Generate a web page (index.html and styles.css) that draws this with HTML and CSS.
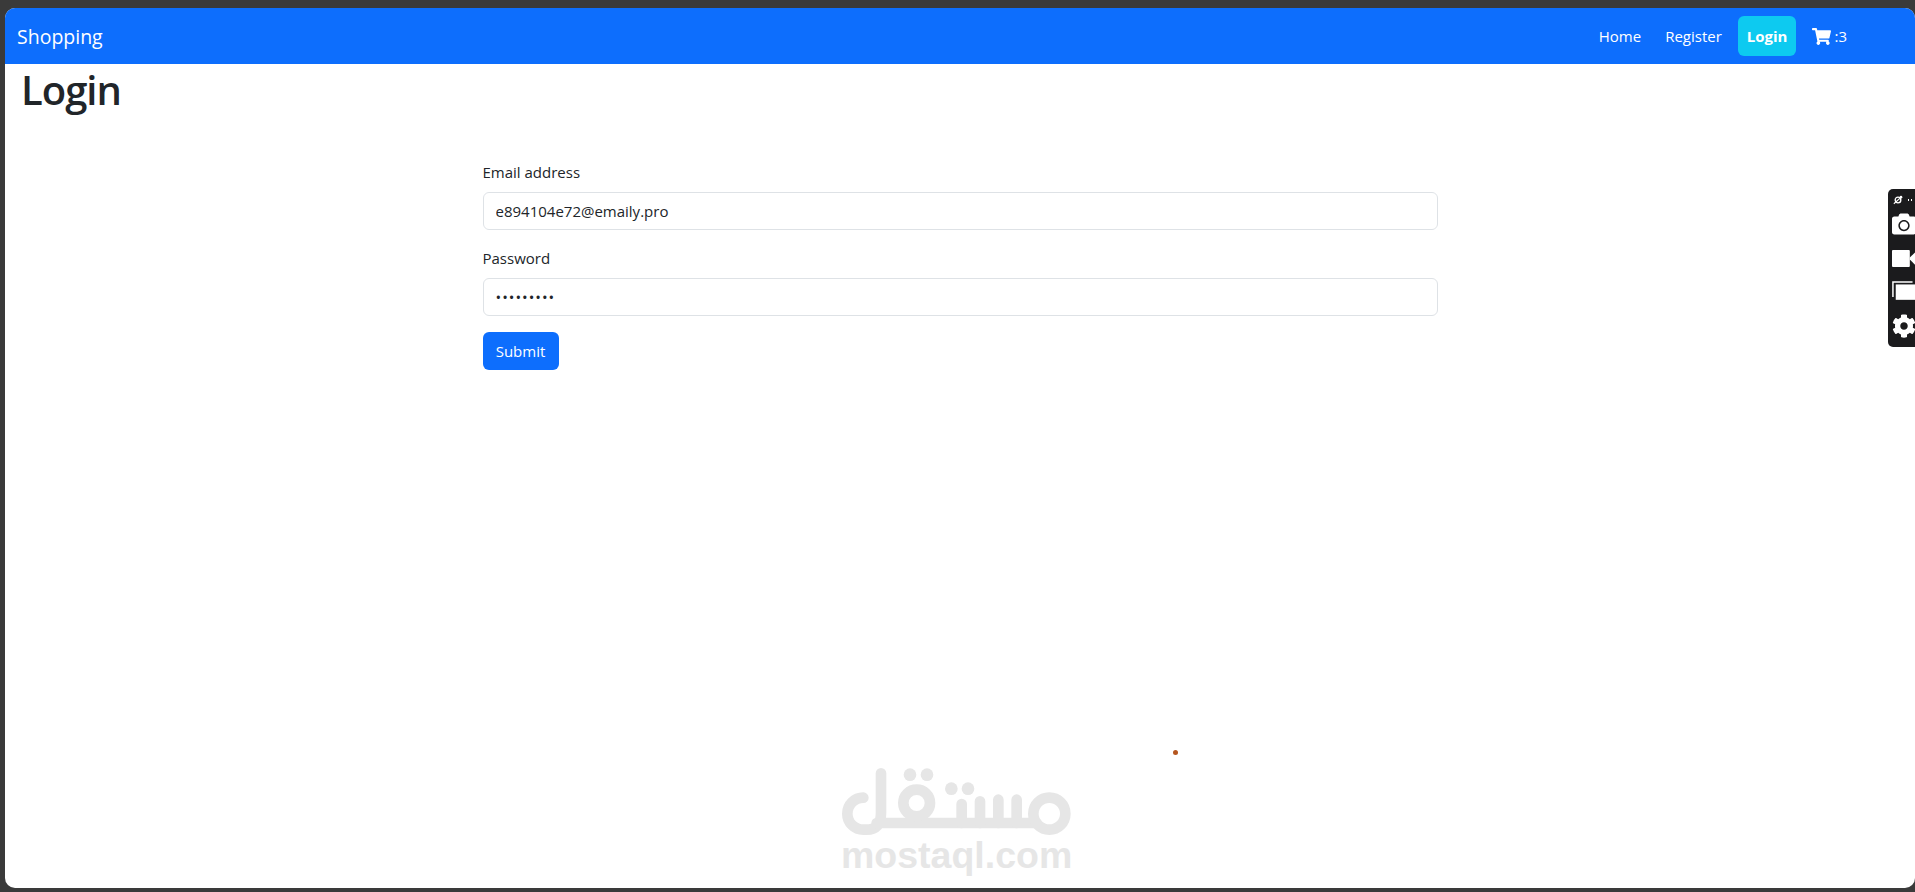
FILE: index.html
```html
<!DOCTYPE html>
<html lang="en">
<head>
    <meta charset="UTF-8">
    <meta name="viewport" content="width=device-width, initial-scale=1.0">
    <title>Login</title>
    <link rel="stylesheet" href="styles.css">
</head>
<body>
    <div class="window">
        <nav class="navbar">
            <a class="brand" href="#">Shopping</a>
            <div class="nav-links">
                <a class="nav-link" href="#">Home</a>
                <a class="nav-link" href="#">Register</a>
                <a class="nav-login" href="#">Login</a>
                <a class="nav-cart" href="#">
                    <svg class="cart-icon" viewBox="0 0 576 512"><path fill="currentColor" d="M528.12 301.319l47.273-208C578.806 78.301 567.391 64 551.99 64H159.208l-9.166-44.81C147.758 8.021 137.93 0 126.529 0H24C10.745 0 0 10.745 0 24v16c0 13.255 10.745 24 24 24h69.883l70.248 343.435C147.325 417.1 136 435.222 136 456c0 30.928 25.072 56 56 56s56-25.072 56-56c0-15.674-6.447-29.835-16.824-40h209.647C430.447 426.165 424 440.326 424 456c0 30.928 25.072 56 56 56s56-25.072 56-56c0-22.172-12.888-41.332-31.579-50.405l5.517-24.276c3.413-15.018-8.002-29.319-23.403-29.319H218.117l-6.545-32h293.145c11.206 0 20.92-7.754 23.403-18.681z"/></svg>
                    <span>:3</span>
                </a>
            </div>
        </nav>

        <h1 class="page-title">Login</h1>

        <form class="login-form">
            <div class="form-group">
                <label for="email">Email address</label>
                <input type="email" id="email" value="e894104e72@emaily.pro">
            </div>
            <div class="form-group">
                <label for="password">Password</label>
                <input class="password-input" type="password" id="password" value="123456789">
            </div>
            <button type="submit">Submit</button>
        </form>
    </div>

    <!-- screen recorder extension panel -->
    <div class="side-widget">
        <div class="widget-top">
            <svg class="widget-logo" viewBox="0 0 12 12"><circle cx="6" cy="6" r="3.4" fill="none" stroke="#fff" stroke-width="1.6"/><path d="M1 10.5 L10.5 2" stroke="#fff" stroke-width="1.3"/><circle cx="9.6" cy="2.6" r="1.6" fill="#fff"/></svg>
            <span class="widget-dots"></span>
        </div>
        <svg class="widget-icon icon-camera" viewBox="0 0 512 512"><path fill="#fff" d="M512 144v288c0 26.5-21.5 48-48 48H48c-26.5 0-48-21.5-48-48V144c0-26.5 21.5-48 48-48h88l12.3-32.9c7-18.7 24.9-31.1 44.9-31.1h125.5c20 0 37.9 12.4 44.9 31.1L376 96h88c26.5 0 48 21.5 48 48zM376 288c0-66.2-53.8-120-120-120s-120 53.8-120 120 53.8 120 120 120 120-53.8 120-120zm-32 0c0 48.5-39.5 88-88 88s-88-39.5-88-88 39.5-88 88-88 88 39.5 88 88z"/></svg>
        <svg class="widget-icon icon-video" viewBox="0 0 32 20"><rect x="0" y="1" width="19" height="18" rx="1" fill="#fff"/><path d="M19 9 L26 2 V18 L19 11 Z" fill="#fff"/></svg>
        <svg class="widget-icon icon-window" viewBox="0 0 30 20"><path d="M1 17 V1 H22" fill="none" stroke="#fff" stroke-width="1.6"/><rect x="4" y="3.5" width="26" height="16.5" fill="#fff"/></svg>
        <svg class="widget-icon icon-gear" viewBox="0 0 512 512"><path fill="#fff" d="M487.4 315.7l-42.6-24.6c4.3-23.2 4.3-47 0-70.2l42.6-24.6c4.9-2.8 7.1-8.6 5.5-14-11.1-35.6-30-67.8-54.7-94.6-3.8-4.1-10-5.1-14.8-2.3L380.8 110c-17.9-15.4-38.5-27.3-60.8-35.1V25.8c0-5.6-3.9-10.5-9.4-11.7-36.7-8.2-74.3-7.8-109.2 0-5.5 1.2-9.4 6.1-9.4 11.7V75c-22.2 7.9-42.8 19.8-60.8 35.1L88.7 85.5c-4.9-2.8-11-1.9-14.8 2.3-24.7 26.7-43.6 58.9-54.7 94.6-1.7 5.4.6 11.2 5.5 14L67.3 221c-4.3 23.2-4.3 47 0 70.2l-42.6 24.6c-4.9 2.8-7.1 8.6-5.5 14 11.1 35.6 30 67.8 54.7 94.6 3.8 4.1 10 5.1 14.8 2.3l42.6-24.6c17.9 15.4 38.5 27.3 60.8 35.1v49.2c0 5.6 3.9 10.5 9.4 11.7 36.7 8.2 74.3 7.8 109.2 0 5.5-1.2 9.4-6.1 9.4-11.7v-49.2c22.2-7.9 42.8-19.8 60.8-35.1l42.6 24.6c4.9 2.8 11 1.9 14.8-2.3 24.7-26.7 43.6-58.9 54.7-94.6 1.5-5.5-.7-11.3-5.6-14.1zM256 336c-44.1 0-80-35.9-80-80s35.9-80 80-80 80 35.9 80 80-35.9 80-80 80z"/></svg>
    </div>

    <span class="cursor-dot"></span>

    <!-- watermark laid over the page -->
    <div class="watermark">
        <svg class="watermark-logo" viewBox="0 0 840 234">
            <g fill="none" stroke="#e6e6e6" stroke-width="32" stroke-linecap="round" stroke-linejoin="round">
                <path d="M183 16 V135 Q183 185 140 185 H130 A48 48 0 1 1 130 89"/>
                <path d="M170 165 H650"/>
                <circle cx="290" cy="105" r="40"/>
                <path d="M425 108 V165 M480 100 V165 M535 95 V165 M590 95 V165"/>
                <circle cx="688" cy="137" r="48"/>
            </g>
            <g fill="#e6e6e6">
                <circle cx="270" cy="20" r="19"/>
                <circle cx="321" cy="20" r="19"/>
                <circle cx="394" cy="62" r="19"/>
                <circle cx="444" cy="62" r="19"/>
            </g>
        </svg>
        <div class="watermark-text">mostaql.com</div>
    </div>
</body>
</html>
```

FILE: styles.css
```css
* {
    box-sizing: border-box;
}

html, body {
    height: 100%;
}

body {
    margin: 0;
    padding: 8px 0 4px 5px;
    background-color: #3a3a3a;
    font-family: "Open Sans", "Noto Sans", Arial, sans-serif;
    font-size: 16px;
    color: #212529;
    overflow: hidden;
}

a {
    color: #fff;
    text-decoration: none;
}

.window {
    height: 880px;
    background: #fff;
    border-radius: 10px;
    overflow: hidden;
}

/* navbar */
.navbar {
    display: flex;
    align-items: center;
    justify-content: space-between;
    height: 56px;
    padding: 0 68px 0 12px;
    background-color: #0d6efd;
}

.brand {
    font-size: 19.5px;
}

.nav-links {
    display: flex;
    align-items: center;
}

.nav-link {
    padding: 8px;
    margin-right: 8px;
    font-size: 15px;
}

.nav-link + .nav-link {
    margin-right: 0;
}

.nav-login {
    margin-left: 8px;
    padding: 8px 9px;
    height: 40px;
    line-height: 24px;
    font-size: 15px;
    font-weight: 700;
    background-color: #0dcaf0;
    border-radius: 6px;
}

.nav-cart {
    display: flex;
    align-items: center;
    gap: 3px;
    margin-left: 16px;
    font-size: 15px;
}

.cart-icon {
    width: 19px;
    height: 17px;
}

/* page */
.page-title {
    margin: 0;
    padding: 2px 0 0 16px;
    height: 48px;
    font-size: 40px;
    font-weight: 600;
    letter-spacing: -1px;
    line-height: 48px;
}

.login-form {
    width: 955px;
    margin: 48px auto 0;
}

.form-group {
    margin-bottom: 16px;
}

label {
    display: block;
    margin-bottom: 8px;
    line-height: 24px;
    font-size: 15px;
}

input {
    display: block;
    width: 100%;
    height: 38px;
    padding: 6px 12px;
    border: 1px solid #dee2e6;
    border-radius: 6px;
    font-family: inherit;
    font-size: 15px;
    color: #212529;
}

.password-input {
    letter-spacing: 1px;
}

button {
    height: 38px;
    padding: 0 12px;
    width: 76px;
    border: none;
    border-radius: 6px;
    background-color: #0d6efd;
    color: #fff;
    font-family: inherit;
    font-size: 15px;
}

/* overlays */
.side-widget {
    position: absolute;
    top: 189px;
    left: 1888px;
    width: 27px;
    height: 158px;
    background: #1b1b1d;
    border-radius: 5px 0 0 5px;
    overflow: hidden;
}

.widget-top {
    display: flex;
    align-items: center;
    gap: 4px;
    padding: 6px 0 0 5px;
}

.widget-logo {
    width: 10px;
    height: 10px;
}

.widget-dots {
    width: 6px;
    height: 2px;
    background-image: radial-gradient(circle, #fff 1px, transparent 1px);
    background-size: 3px 2px;
}

.widget-icon {
    position: absolute;
    left: 4px;
}

.icon-camera {
    top: 23px;
    width: 24px;
    height: 24px;
}

.icon-video {
    top: 60px;
    width: 30px;
    height: 19px;
}

.icon-window {
    top: 92px;
    width: 28px;
    height: 19px;
}

.icon-gear {
    top: 125px;
    width: 24px;
    height: 24px;
}

.cursor-dot {
    position: absolute;
    top: 750px;
    left: 1173px;
    width: 5px;
    height: 5px;
    border-radius: 50%;
    background: #b5561f;
}

.watermark {
    position: absolute;
    top: 768px;
    left: 820px;
    width: 280px;
}

.watermark-logo {
    display: block;
    width: 280px;
    height: 78px;
}

.watermark-text {
    margin: -9px 0 0 21px;
    font-family: "Liberation Sans", Arial, sans-serif;
    font-size: 37.5px;
    font-weight: 700;
    line-height: 37px;
    color: #e6e6e6;
}
```
